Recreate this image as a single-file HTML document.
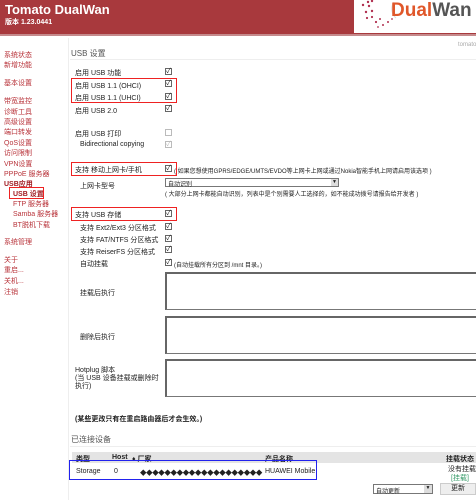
<!DOCTYPE html>
<html><head><meta charset="utf-8"><style>
*{margin:0;padding:0;box-sizing:border-box}
body{width:476px;height:500px;overflow:hidden;background:#fff;font-family:"Liberation Sans","Noto Sans CJK SC",sans-serif;font-size:7px;color:#222;position:relative}
.a{position:absolute;white-space:nowrap}
#hd{position:absolute;left:0;top:0;width:476px;height:36px;background:#a8393d;border-bottom:2px solid #c58a8c}
#logo{position:absolute;left:354px;top:0;width:122px;height:33px;background:#fff}
.s{color:#b8333a;left:4px}
.cb{position:absolute;left:165px;width:7px;height:7px;border:1px solid #666;background:#fff;font-size:7px;line-height:5px;text-align:center}
.box{position:absolute;border:1px solid #e22}
.ta{position:absolute;left:165px;width:315px;border:1px solid #777;border-top:2px solid #666;border-left:2px solid #666;background:#fff}
</style></head><body>
<div id="hd"></div>
<div class="a" style="left:5px;top:2px;font-size:13px;color:#fff;font-weight:bold">Tomato DualWan</div>
<div class="a" style="left:5px;top:17px;font-size:7px;color:#fff;font-weight:bold">版本 1.23.0441</div>
<div id="logo">
<svg width="50" height="33" style="position:absolute;left:0;top:0">
<g fill="#b03050"><circle cx="14" cy="2" r="1.2"/><circle cx="18" cy="1" r="1.2"/><circle cx="9" cy="5" r="1.2"/><circle cx="15" cy="6" r="1.2"/><circle cx="12" cy="12" r="1.2"/><circle cx="18" cy="11" r="1.2"/><circle cx="13" cy="18" r="1.1"/><circle cx="18" cy="17" r="1.1"/><circle cx="22" cy="22" r="1.1"/><circle cx="26" cy="19" r="1"/><circle cx="29" cy="25" r="1"/><circle cx="34" cy="22" r="1"/><circle cx="38" cy="19" r="0.9"/><circle cx="24" cy="27" r="0.9"/></g>
<path d="M40 2 A12 12 0 0 0 42 18" stroke="#ddd" fill="none"/></svg>
<div class="a" style="left:37px;top:0px;font-size:19px;font-weight:bold"><span style="color:#e0572a">Dual</span><span style="color:#555">Wan</span></div>
</div>
<div class="a" style="left:458px;top:42px;color:#aaa;font-size:6px">tomato</div>
<div style="position:absolute;left:68px;top:38px;width:1px;height:462px;background:#eee"></div>

<div class="a s" style="top:50px">系统状态</div>
<div class="a s" style="top:60px">新增功能</div>
<div class="a s" style="top:78px">基本设置</div>
<div class="a s" style="top:96px">带宽监控</div>
<div class="a s" style="top:107px">诊断工具</div>
<div class="a s" style="top:117px">高级设置</div>
<div class="a s" style="top:127px">端口转发</div>
<div class="a s" style="top:138px">QoS设置</div>
<div class="a s" style="top:148px">访问限制</div>
<div class="a s" style="top:159px">VPN设置</div>
<div class="a s" style="top:169px">PPPoE 服务器</div>
<div class="a s" style="top:179px;color:#a01a20;font-weight:bold">USB应用</div>
<div class="a s" style="top:189px;left:13px;color:#a01a20;font-weight:bold">USB 设置</div>
<div class="box" style="left:9px;top:187px;width:35px;height:12px"></div>
<div class="a s" style="top:199px;left:13px">FTP 服务器</div>
<div class="a s" style="top:209px;left:13px">Samba 服务器</div>
<div class="a s" style="top:220px;left:13px">BT脱机下载</div>
<div class="a s" style="top:237px">系统管理</div>
<div class="a s" style="top:255px">关于</div>
<div class="a s" style="top:265px">重启...</div>
<div class="a s" style="top:276px">关机...</div>
<div class="a s" style="top:287px">注销</div>

<div class="a" style="left:71px;top:48px;font-size:8px;color:#555">USB 设置</div>
<div style="position:absolute;left:70px;top:59px;width:406px;height:1px;background:#eee"></div>

<div class="a" style="left:75px;top:68px">启用 USB 功能</div><div class="cb" style="top:68px">✓</div>
<div class="a" style="left:75px;top:81px">启用 USB 1.1 (OHCI)</div><div class="cb" style="top:80px">✓</div>
<div class="a" style="left:75px;top:93px">启用 USB 1.1 (UHCI)</div><div class="cb" style="top:93px">✓</div>
<div class="box" style="left:71px;top:78px;width:106px;height:25px"></div>
<div class="a" style="left:75px;top:106px">启用 USB 2.0</div><div class="cb" style="top:105px">✓</div>
<div class="a" style="left:75px;top:129px">启用 USB 打印</div><div class="cb" style="top:129px;border-color:#bbb"></div>
<div class="a" style="left:80px;top:141px">Bidirectional copying</div><div class="cb" style="top:141px;border-color:#bbb;color:#bbb">✓</div>
<div class="a" style="left:75px;top:165px">支持 移动上网卡/手机</div><div class="cb" style="top:165px">✓</div>
<div class="box" style="left:71px;top:162px;width:106px;height:14px"></div>
<div class="a" style="left:174px;top:166px;font-size:6px">( 如果您想使用GPRS/EDGE/UMTS/EVDO等上网卡上网或通过Nokia智能手机上网请启用该选项 )</div>
<div class="a" style="left:80px;top:181px">上网卡型号</div>
<div style="position:absolute;left:165px;top:178px;width:174px;height:9px;border:1px solid #777;background:#fff"><span class="a" style="left:2px;top:0px;font-size:6px">自动识别</span><span style="position:absolute;right:0;top:0;width:7px;height:7px;background:#ddd;font-size:5px;text-align:center">▼</span></div>
<div class="a" style="left:165px;top:189px;font-size:6px">( 大部分上网卡都能自动识别，列表中是个别需要人工选择的，如不能成功拨号请报告给开发者 )</div>
<div class="a" style="left:75px;top:210px">支持 USB 存储</div><div class="cb" style="top:210px">✓</div>
<div class="box" style="left:71px;top:207px;width:106px;height:14px"></div>
<div class="a" style="left:80px;top:223px">支持 Ext2/Ext3 分区格式</div><div class="cb" style="top:223px">✓</div>
<div class="a" style="left:80px;top:235px">支持 FAT/NTFS 分区格式</div><div class="cb" style="top:235px">✓</div>
<div class="a" style="left:80px;top:247px">支持 ReiserFS 分区格式</div><div class="cb" style="top:246px">✓</div>
<div class="a" style="left:80px;top:259px">自动挂载</div><div class="cb" style="top:259px">✓</div>
<div class="a" style="left:174px;top:260px;font-size:6px">(自动挂载所有分区到 /mnt 目录。)</div>

<div class="ta" style="top:272px;height:38px"></div>
<div class="a" style="left:80px;top:288px">挂载后执行</div>
<div class="ta" style="top:316px;height:38px"></div>
<div class="a" style="left:80px;top:332px">删除后执行</div>
<div class="ta" style="top:359px;height:38px"></div>
<div class="a" style="left:75px;top:367px;line-height:8px">Hotplug 脚本<br>(当 USB 设备挂载或删除时<br>执行)</div>
<div class="a" style="left:75px;top:414px;font-weight:bold">(某些更改只有在重启路由器后才会生效。)</div>
<div class="a" style="left:71px;top:434px;font-size:8px;color:#555">已连接设备</div>
<div style="position:absolute;left:70px;top:446px;width:406px;height:1px;background:#eee"></div>
<div style="position:absolute;left:72px;top:452px;width:404px;height:11px;background:#e4e4e4"></div>
<div class="a" style="left:76px;top:454px;font-weight:bold">类型</div>
<div class="a" style="left:112px;top:454px;font-weight:bold">Host</div>
<div class="a" style="left:132px;top:454px;font-weight:bold">♦ 厂家</div>
<div class="a" style="left:265px;top:454px;font-weight:bold">产品名称</div>
<div class="a" style="left:446px;top:454px;font-weight:bold">挂载状态</div>
<div class="a" style="left:76px;top:468px">Storage</div>
<div class="a" style="left:114px;top:468px">0</div>
<div class="a" style="left:140px;top:467px;font-size:6.5px;letter-spacing:-0.4px">◆◆◆◆◆◆◆◆◆◆◆◆◆◆◆◆◆◆◆◆</div>
<div class="a" style="left:265px;top:468px">HUAWEI Mobile</div>
<div style="position:absolute;left:69px;top:460px;width:248px;height:20px;border:1px solid #22e"></div>
<div class="a" style="left:448px;top:464px">没有挂载</div>
<div class="a" style="left:451px;top:473px;color:#396">[挂载]</div>
<div style="position:absolute;left:373px;top:484px;width:60px;height:10px;border:1px solid #777"><span class="a" style="left:2px;top:1px;font-size:6px">自动更新</span><span style="position:absolute;right:0;top:0;width:8px;height:8px;background:#ddd;font-size:5px;text-align:center">▼</span></div>
<div style="position:absolute;left:440px;top:483px;width:36px;height:12px;background:#eee;border:1px solid #ccc;text-align:center;line-height:10px">更新</div>
</body></html>
